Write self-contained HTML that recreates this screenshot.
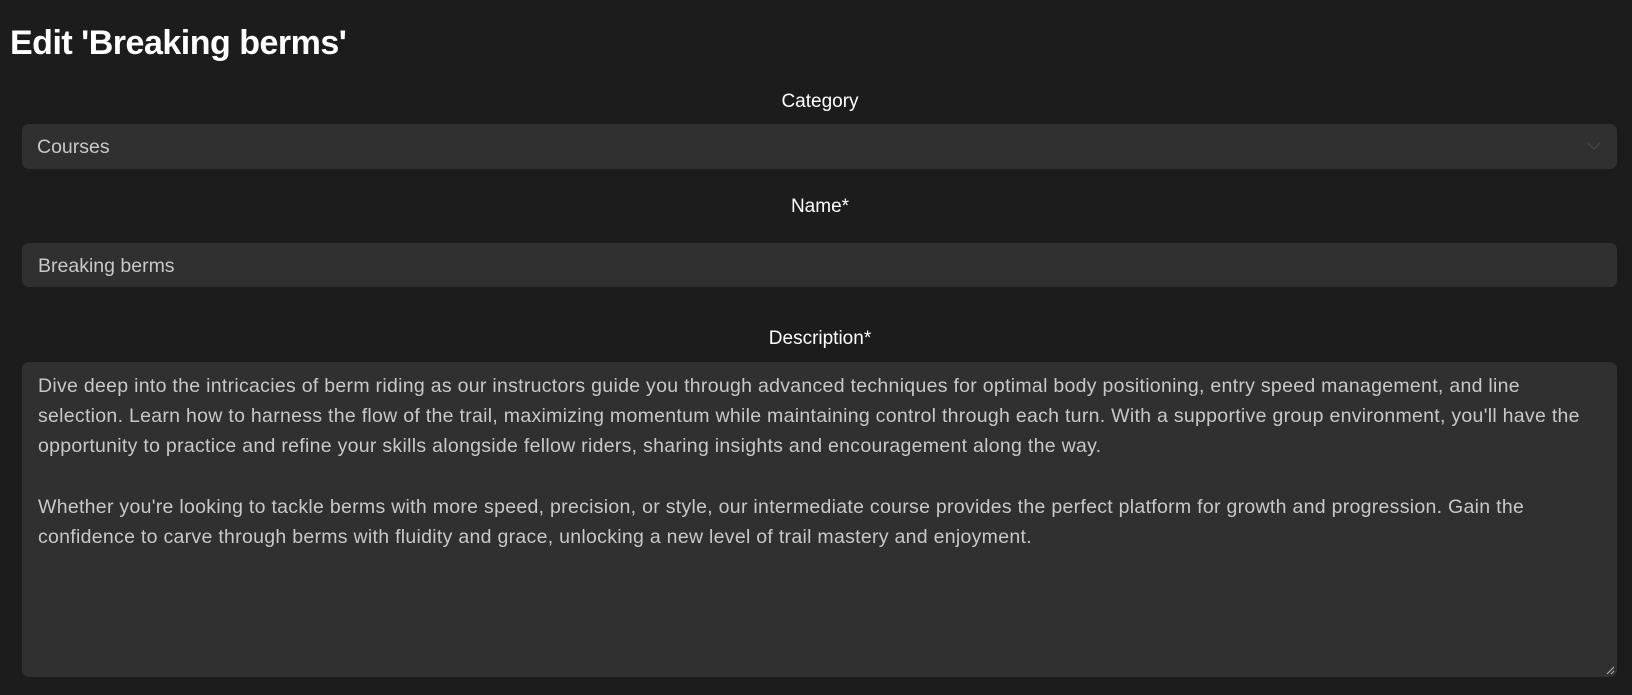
<!DOCTYPE html>
<html><head><style>
body{margin:0;background:#1c1c1c;width:1632px;height:695px;overflow:hidden;font-family:"Liberation Sans",sans-serif;color:#fff}
h1{position:absolute;left:10px;top:24px;margin:0;font-size:34px;font-weight:bold;letter-spacing:-0.5px}
.lbl{position:absolute;left:0;width:1640px;text-align:center;font-size:19px}
.box{position:absolute;left:22px;width:1595px;background:#303030;border-radius:7px;color:#c8c8c8;font-size:19.5px;box-sizing:border-box;padding-left:16px}
.ta{white-space:pre;line-height:30.2px;padding-top:9px;font-size:19.5px;letter-spacing:0.29px;overflow:hidden}
</style></head><body>
<h1>Edit 'Breaking berms'</h1>
<div class="lbl" style="top:91px">Category</div>
<div class="box" style="top:124px;height:45px;line-height:47px;padding-left:15px">Courses
<svg style="position:absolute;right:16px;top:18px" width="14" height="9" viewBox="0 0 14 9"><path d="M1 1l6 6 6-6" stroke="#444" stroke-width="1.5" fill="none"/></svg></div>
<div class="lbl" style="top:196px">Name*</div>
<div class="box" style="top:243px;height:44px;line-height:47px">Breaking berms</div>
<div class="lbl" style="top:328px">Description*</div>
<div class="box ta" style="top:362px;height:315px">Dive deep into the intricacies of berm riding as our instructors guide you through advanced techniques for optimal body positioning, entry speed management, and line
selection. Learn how to harness the flow of the trail, maximizing momentum while maintaining control through each turn. With a supportive group environment, you'll have the
opportunity to practice and refine your skills alongside fellow riders, sharing insights and encouragement along the way.

Whether you're looking to tackle berms with more speed, precision, or style, our intermediate course provides the perfect platform for growth and progression. Gain the
confidence to carve through berms with fluidity and grace, unlocking a new level of trail mastery and enjoyment.<svg style="position:absolute;right:2px;bottom:2px" width="10" height="10" viewBox="0 0 10 10"><path d="M2 9L9 2M6 9L9 6" stroke="#aaa" stroke-width="1.2"/></svg></div>
</body></html>
